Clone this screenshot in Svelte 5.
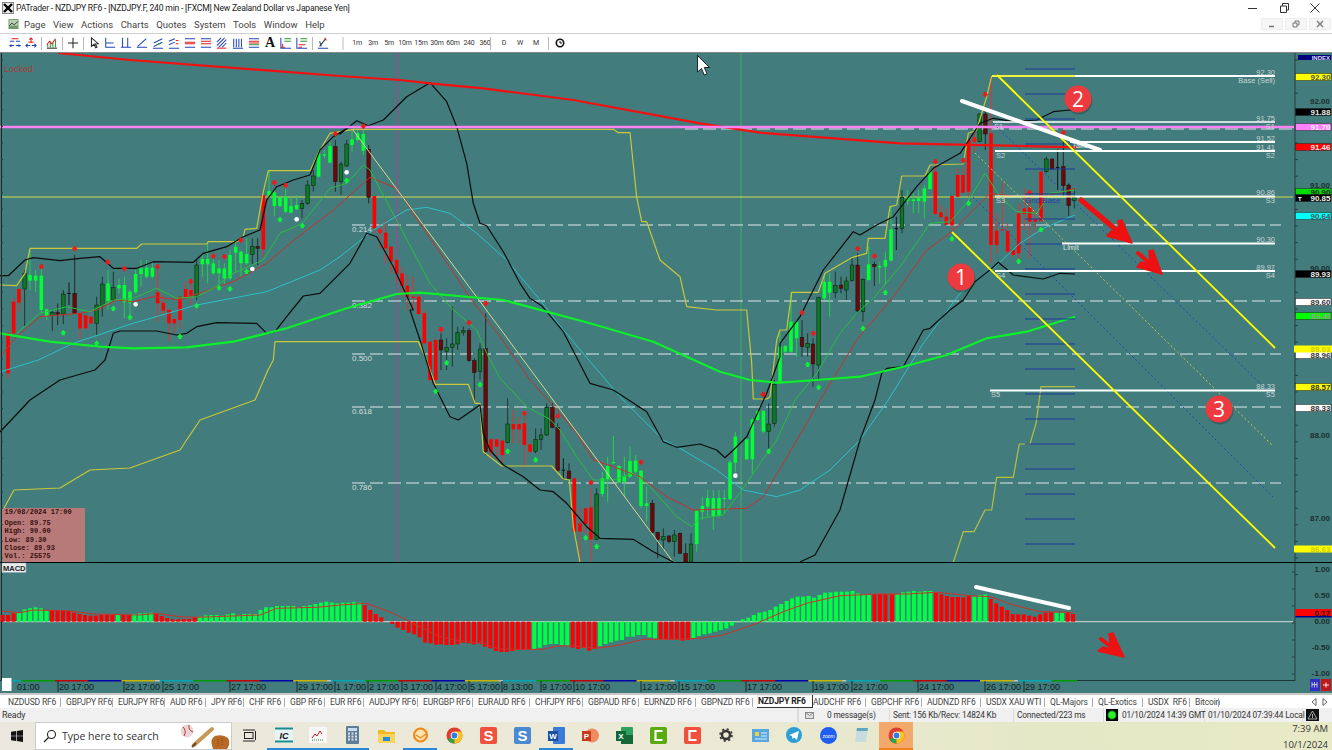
<script>
  // helpers: the coordinates below were read off 3x crops, z() maps them back to page pixels
  const z = (x0, y0, s) =>
    s.trim().split(/\s+/).map((p) => {
      const [x, y] = p.split(",").map(Number);
      return `${(x0 + x / 3).toFixed(1)},${(y0 + y / 3).toFixed(1)}`;
    }).join(" ");

  const parseCandles = (x0, y0, s) =>
    s.trim().split("\n").map((row) => {
      const [zx, k, wt, bt, bb, wb] = row.trim().split(/\s+/);
      return {
        x: x0 + zx / 3, k,
        wt: y0 + wt / 3, bt: y0 + bt / 3,
        bb: Math.min(y0 + bb / 3, 562), wb: Math.min(y0 + wb / 3, 562),
      };
    });

  const candles = [
    ...parseCandles(0, 120, `24 r 635 640 760 775
41 r 535 545 640 645
57 r 505 507 548 575
74 G 450 460 507 618
90 g 390 465 482 510
107 g 450 467 482 515
124 g 440 467 570 580
140 g 565 568 588 600
157 G 570 577 587 632
173 R 550 578 583 615
190 G 510 522 582 612
207 K 487 519 522 555
224 R 405 520 580 582
240 r 578 580 625 655
257 r 584 586 625 628
273 r 588 590 610 612
290 G 530 555 610 645
307 G 470 492 557 590
324 g 450 490 543 570
340 G 455 502 538 545
357 g 475 495 505 520
373 g 470 495 547 595
390 g 510 515 548 585
407 g 450 462 517 522
423 g 420 445 462 500
440 g 420 443 470 475
457 g 430 443 470 475
473 r 450 517 550 605
490 r 525 548 572 585
507 r 565 570 610 665
523 r 595 597 610 640
540 r 530 530 600 625
557 r 485 507 533 535
573 r 490 510 527 555
590 G 420 435 530 540
607 g 400 417 433 470
623 g 370 417 433 490
640 g 415 430 460 465
657 g 420 445 460 490
673 g 430 445 475 495
690 g 390 405 475 480
707 g 360 380 398 455
723 g 392 395 430 470
740 g 355 402 430 435
757 G 355 380 403 435
773 R 355 380 385 435
790 r 225 225 388 410
807 g 150 213 228 232
823 g 205 217 258 290
840 g 230 232 258 262
857 g 200 230 275 280
873 g 230 258 278 280
890 g 225 255 268 270
906 G 240 250 265 295
923 G 180 195 250 255
940 G 150 168 197 215
956 g 90 100 170 172
973 g 90 103 107 115
990 g 65 78 128 130
1006 R 60 80 185 215
1023 G 125 132 185 225
1040 G 60 72 138 140
1056 g 30 58 75 95
1073 g 30 40 60 65
1090 g 30 42 92 105
1106 R 75 88 232 250
1123 r 228 228 325 340
1140 r 310 333 338 385
1157 r 300 338 385 430
1173 r 378 380 425 460
1190 r 415 420 462 490
1206 r 440 460 498 530
1222 r 465 497 532 570
1240 r 470 530 534 570
1256 r 520 530 582 585`),
    ...parseCandles(400, 300, `73 r 30 40 130 135
90 r 122 125 240 245
107 r 115 120 240 250
123 R 100 120 150 210
140 G 115 142 155 210
157 G 20 132 142 200
173 G 80 97 132 150
190 G 80 92 98 107
207 R 85 92 182 185
223 R 175 182 218 310
240 G 130 147 215 240
257 R 40 145 455 465
273 r 415 418 458 475
290 r 415 418 440 480
307 r 420 422 465 490
323 G 295 372 428 430
340 r 330 372 388 430
357 r 350 372 388 430
373 r 350 370 435 500
390 r 430 433 455 460
407 G 385 418 455 460
423 G 385 405 418 450
440 G 310 322 405 408
457 R 310 322 382 385
473 R 370 382 512 515
490 K 475 509 512 540
507 R 490 513 535 538
523 r 533 535 695 700
540 r 625 670 695 786
557 r 622 625 672 700
573 r 565 622 718 786
590 G 565 582 718 720
607 g 515 535 582 590
623 g 470 498 538 605
640 g 408 486 490 490
657 g 495 498 548 550
673 g 470 527 545 590
690 g 440 483 530 535
707 g 465 482 515 520
723 g 510 512 618 625
740 g 560 610 618 665
757 R 600 610 697 700
773 R 695 697 718 775
790 G 685 710 720 750
807 R 705 708 725 730
823 G 690 705 725 770
840 R 698 700 760 762
857 R 730 760 786 786
873 G 700 732 786 786
890 g 630 632 732 755
907 g 590 618 635 660
923 g 570 594 620 650
940 g 570 594 648 690
957 g 570 594 648 652
973 g 570 594 596 640
990 g 480 487 598 600
1006 g 395 410 488 515
1040 g 415 418 478 480
1057 g 355 358 478 520
1073 g 330 333 360 362
1090 g 330 333 395 400
1106 G 310 372 395 455
1123 G 240 253 370 380`),
    ...parseCandles(760, 90, `60 g 725 770 875 878
76 g 765 768 785 790
93 g 605 695 785 788
110 g 690 695 745 800
126 R 690 742 770 800
143 G 730 760 772 800
159 R 745 762 822 890
176 G 620 622 825 870
193 g 550 575 625 630
209 g 550 575 608 680
226 G 545 587 608 625
243 R 560 585 595 610
259 G 560 573 600 630
276 G 500 525 572 575
293 R 490 525 663 670
309 G 565 568 665 695
326 g 470 523 570 572
343 R 515 523 530 588
359 g 515 528 532 580
376 g 485 510 530 585
393 g 350 418 512 515
409 K 380 414 417 480
426 G 300 322 415 430
443 g 300 322 333 345
460 g 310 328 333 370
476 g 300 322 333 370
493 g 285 295 335 385
510 g 243 245 297 300
526 r 225 245 372 375
543 r 345 367 382 390
559 r 355 380 404 406
576 r 316 318 406 420
593 r 235 255 320 322
609 r 230 255 308 310
626 r 148 150 305 320
643 r 120 150 155 185
659 G 70 72 155 157
676 R 50 72 132 180
693 r -40 130 465 520
710 r 370 422 465 490
727 r 275 418 420 420
743 r 400 423 485 490
760 r 478 480 495 500
776 r 340 370 490 510
793 r 295 355 372 420
809 r 310 352 395 505
826 r 360 388 395 430
843 r 243 245 392 395
859 G 200 207 245 248
876 R 205 207 237 240
893 K 178 231 234 300
910 R 125 230 287 320
926 R 280 285 347 378
943 G 295 322 332 355`),
  ];

  const bodyColor = { r: "#ff0000", g: "#00ff33", G: "#0b7a22", R: "#6e0808", K: "#101010" };
  const wickColor = { r: "#e23232", g: "#22d24c", G: "#1c3a2a", R: "#2a2a2a", K: "#151515" };

  // small arrow and dot markers
  const marks = (x0, y0, s) =>
    s.trim().split(/\s+/).map((p) => {
      const [x, y] = p.split(",").map(Number);
      return [x0 + x / 3, y0 + y / 3];
    });
  const redMarks = [
    ...marks(0, 120, "224,388 124,442 323,428 373,448 473,442 573,486 640,410 673,412 723,362 823,190 857,198 1006,43 1090,20 1140,335 1323,630"),
    ...marks(400, 300, "123,90 207,70 257,12 373,342 473,350 573,550 723,488 1090,285"),
    ...marks(760, 90, "10,915 126,670 160,732 293,478 343,500 526,217 610,213 643,150 676,15 809,310 910,130"),
  ];
  const greenMarks = [
    ...marks(0, 120, "190,637 290,668 340,564 390,590 540,648 590,556 657,502 690,505 740,453 840,297 907,316 1040,180"),
    ...marks(400, 300, "107,272 140,187 240,252 323,452 407,478 557,712 590,738 1106,452"),
    ...marks(760, 90, "143,822 176,890 309,714 376,606 576,445 626,338 776,512 843,417"),
  ];
  const whiteDots = [
    ...marks(0, 120, "407,553 757,447 890,298 1040,157"),
    ...marks(400, 300, "1006,527"),
  ];

  // indicator lines
  const upperBand = [
    z(0, 120, "0,467 25,467 75,420 100,413 180,422 240,415 300,410 340,445 410,445 460,425 580,427 610,400 680,380 730,350 780,330 800,240 830,200 880,180 930,165 960,90 1000,50 1040,25"),
    z(340, 60, "0,222 50,182 85,197 130,180 200,110 270,68 320,125 350,200 380,310 400,430 420,490 440,497 490,575 540,670 570,715 605,737"),
    z(400, 300, "490,95 570,250 640,270 740,335 790,425 830,442 900,432 950,450 975,473 1000,450 1040,410 1100,280 1140,170"),
    z(760, 90, "60,760 120,680 190,540 280,425 300,435 350,405 400,380 470,290 520,235 600,190 660,100 700,85 760,95 830,90 880,65 930,60 950,62"),
  ].join(" ");
  const lowerBand = [
    "0,432 30,400 60,380 95,370",
    z(0, 120, "315,720 340,640 360,633 470,633 530,645 560,640 590,620 650,608 770,610 800,640 825,635 860,590 910,528 960,520 990,490 1050,430 1100,340 1130,350 1180,440 1240,570"),
    z(400, 300, "30,30 60,120 100,250 150,350 175,360 240,315 250,400 270,450 310,495 370,530 420,570 460,575 500,610 560,680 600,715 700,718 760,755 820,786"),
  ].join(" ");
  const lowerBand2 = [
    "800,562 815,555 840,510 860,440",
    z(760, 90, "345,930 365,850 380,835 430,830 490,720 510,715 570,660 610,630 645,575 690,540 715,517 760,555 850,567 900,550 945,552"),
  ].join(" ");
  const cyanLine = [
    "0,372",
    z(0, 120, "115,720 220,670 400,610 590,555 800,515 960,450"),
    z(340, 60, "0,590 100,510 200,450 260,442 330,460 410,520 500,600 600,720"),
    z(400, 300, "490,90 660,290 790,420 840,445 950,510 1030,570 1130,590 1200,570"),
    "830,470 860,440",
    z(760, 90, "385,930 490,760 600,610 700,535 780,460 850,415 945,375"),
  ].join(" ");
  const thickGreen = [
    z(0, 120, "0,640 150,665 300,680 400,685 560,682 700,665 860,625 1040,565 1190,522 1260,518"),
    z(400, 300, "310,0 570,70 760,125 960,215 1050,240 1120,247"),
    z(760, 90, "60,878 170,870 300,860 430,830 560,795 680,745 800,725 945,680"),
  ].join(" ");
  const thinGreen = [
    z(0, 120, "50,640 120,580 200,560 270,575 340,540 400,535 470,505 530,535 590,530 640,505 700,460 790,420 840,340 907,310 990,205 1040,190 1090,135 1110,150 1200,320 1290,490"),
    z(400, 300, "155,25 230,90 265,170 300,235 380,320 450,358 480,390 530,470 580,540 640,540 700,520 750,560 830,650 875,680 900,655 970,645 1040,550 1080,490 1130,420"),
    z(760, 90, "105,930 170,850 240,730 290,670 340,625 420,530 490,430 510,400 570,395 620,340 675,250 720,320 770,365 830,370 870,310 945,300"),
  ].join(" ");
  const thinRed = [
    z(0, 120, "0,710 50,650 120,590 240,580 290,570 350,540 400,545 460,530 540,540 640,505 700,485 800,430 870,370 1000,270 1110,172 1190,205"),
    z(400, 300, "215,0 300,110 390,240 470,330 530,400 580,480 640,500 720,530 800,590 880,630 1040,625 1090,590 1150,490"),
    z(760, 90, "180,930 290,750 400,620 500,480 575,425 620,380 690,310 770,320 850,320 945,295"),
  ].join(" ");
  const thickRed = "58,53 130,60 " + z(340, 60, "0,48 180,60 270,70 430,85 700,120 1080,190") + " " + z(760, 90, "0,128 420,160 950,172");
  const stepUpper = [
    z(0, 120, "0,495 50,497 75,460 90,385 410,385 425,372 620,372 625,365 710,365 730,350 735,328 770,325 790,215 805,152 930,152 960,90 990,40 1060,28"),
    z(340, 60, "820,208 835,218 870,218 890,412 905,485 920,485 960,600 1020,650 1040,740"),
    z(400, 300, "950,30 1040,30 1055,190 1060,297 1100,297"),
    z(760, 90, "30,920 50,750 60,720 80,720 95,607 175,607 195,550 275,503 320,490 325,445 375,445 390,350 410,345 425,258 495,258 510,225 610,222 625,130 650,120 680,20 695,-42"),
  ].join(" ");
  const stepLower = [
    "3,510 14,490 60,488 90,470 130,468 180,450 200,420 255,400 268,370",
    z(0, 120, "820,720 825,665 1255,665 1280,720"),
    z(400, 300, "60,125 105,253 205,253 225,310 240,310 250,455 305,498 455,498 490,537 508,540 520,680 540,786"),
  ].join(" ");
  const stepRight = z(900, 220, "160,1027 190,935 222,935 255,870 275,870 290,772 340,772 358,672 390,672 408,610 423,500 525,500");

  const dashed = [[225, "0.214"], [301, "0.382"], [354, "0.500"], [407, "0.618"], [483, "0.786"]];
  const blueTicks = Array.from({ length: 20 }, (_, i) => 69 + i * 25);

  const levels = [
    { y: 76, x1: 992, v: "92.30", note: "Base (Sell)", w: 2 },
    { y: 122, x1: 993, v: "91.75", s: "S1", w: 1.5 },
    { y: 142, x1: 1070, v: "91.52", w: 2 },
    { y: 151, x1: 995, v: "91.41", s: "S2", w: 2 },
    { y: 196.5, x1: 995, v: "90.86", s: "S3", w: 2 },
    { y: 243.5, x1: 1062, v: "90.30", w: 2 },
    { y: 271, x1: 995, v: "89.97", s: "S4", w: 2 },
    { y: 390.5, x1: 990, v: "88.33", s: "S5", w: 2 },
  ];

  const priceBoxes = [
    { y: 77, t: "92.30", bg: "#ffff00", c: "#555" },
    { y: 112, t: "91.88", bg: "#000", c: "#eee" },
    { y: 127, t: "91.70", bg: "#ff80ff", c: "#eee" },
    { y: 147, t: "91.46", bg: "#ff0000", c: "#eee" },
    { y: 192, t: "90.90", bg: "#00dd00", c: "#222" },
    { y: 198, t: "90.85", bg: "#000", c: "#eee" },
    { y: 216, t: "90.64", bg: "#00ffff", c: "#555" },
    { y: 274, t: "89.93", bg: "#000", c: "#eee" },
    { y: 302, t: "89.60", bg: "#fff", c: "#333" },
    { y: 316, t: "89.43", bg: "#00ff00", c: "#999" },
    { y: 355, t: "88.96", bg: "#fff", c: "#333" },
    { y: 349, t: "89.03", bg: "#ffff00", c: "#cc0", wide: true },
    { y: 387, t: "88.57", bg: "#ffff00", c: "#333" },
    { y: 408, t: "88.33", bg: "#fff", c: "#333" },
    { y: 549, t: "86.63", bg: "#ffff00", c: "#cc0", wide: true },
  ];
  const axisText = [[92.0, 104], [91.0, 188], [90.0, 271], [88.0, 438], [87.0, 521]];
  const macdAxis = [["1.00", 572], ["0.50", 598], ["0.00", 624], ["-0.50", 650], ["-1.00", 676]];
  const axisTicks = Array.from({ length: 32 }, (_, i) => 60 + i * 16.6);
  const macdTicks = Array.from({ length: 7 }, (_, i) => 572 + i * 17);

  // MACD histogram
  const ZERO = 621.7;
  const bars = (x0, y0, start, s) =>
    s.trim().split(/\s+/).map((p, i) => {
      const y = y0 + Number(p.slice(1)) / 3;
      return { x: x0 + (start + i * 16.46) / 3, y: Math.min(y, ZERO), h: Math.abs(y - ZERO), c: p[0] === "g" ? "#00ff44" : "#ff0000" };
    });
  const macd = [
    ...bars(0, 500, 8, "r345 r345 r340 g337 g328 g325 g322 g325 g332 r330 r333 r333 r333 r338 r342 r345 r347 r347 r345 r345 r345 g345 r345 r345 g342 g340 g340 g338 r342 r348 r354 r358 r358 r357 r357 r352 g350 g346 g345 g345 g347 g343 g340 g345 g342 g342 g342 g330 g322 g322 g318 g318 g318 g318 g322 g318 g316 g312 g308 g305 g308 g310 g308 g308 g306 g308 r316 r330 r342 r352 r365 r372 r383 r390 r398 r403 r412 r428 r430 r434"),
    ...bars(440, 575, 3, "r208 r210 r210 r208 r203 r205 r208 r203 r215 r220 r228 r231 r231 r228 r224 r223 r223 g222 g218 g210 g207 g207 g210 g211 r218 r222 r218 r227 r221 g213 g207 g202 g197 g195 g185 g185 g180 g180 g187 g190 r192 r192 r193 r193 r197 r195 g190 g183 g178 g175 g170 g165 g160 g152 g142 g133 g128 g120 g113 g110 g105 g95 g87 g78 g70 g65 g65 g63 g68 g60 g53 g52 g50 g50 g50 g48 g55 g58 g58 r57 r57 r58"),
    ...bars(880, 565, 36, "r87 g88 g82 g80 g78 g80 g78 g78 r83 r88 r93 r96 r96 r97 r93 g95 g90 g88 r102 r115 r125 r135 r147 r148 r148 r152 r155 r148 r143 r142 g143 g143 r143 r147"),
  ];
  const signal = [
    z(0, 500, "5,333 60,338 100,330 200,332 280,342 420,345 470,340 540,350 590,352 640,350 780,345 830,325 950,322 1020,315 1100,310 1180,340 1230,365 1300,400"),
    z(440, 575, "0,185 60,197 120,205 180,222 230,223 310,223 350,213 400,213 470,220 540,210 610,193 700,193 780,190 850,180 950,145 1030,110 1100,85 1200,62"),
    z(880, 565, "0,87 80,87 170,82 270,92 330,95 400,120 480,140 580,142"),
  ].join(" ");

  // time axis
  const stripColors = [["#00a5b5", 33.3], ["#009a00", 33.3], ["#c00000", 33.3], ["#0000a8", 33.3], ["#c8b400", 33.3], ["#c0c0c0", 5]];
  const strip = [];
  for (let base = -11.7; base < 1077; base += 171.7) {
    let x = base;
    for (const [c, w] of stripColors) {
      const a = Math.max(x, 12), b = Math.min(x + w, 1077);
      if (b > a) strip.push({ x: a, w: b - a, c });
      x += w;
    }
  }
  const timeLabels = [[16, "01:00", false], [58, "20 17:00"], [124, "22 17:00"], [163, "25 17:00"], [230, "27 17:00"], [297, "29 17:00"], [335, "1 17:00"], [368, "2 17:00"], [402, "3 17:00"], [436, "4 17:00"], [469, "5 17:00"], [502, "8 13:00"], [541, "9 17:00"], [574, "10 17:00"], [641, "12 17:00"], [679, "15 17:00"], [746, "17 17:00"], [813, "19 17:00"], [852, "22 17:00"], [918, "24 17:00"], [985, "26 17:00"], [1024, "29 17:00"]];

  const infoLines = ["Open: 89.75", "High: 90.00", "Low: 89.30", "Close: 89.93", "Vol.: 25575"];

  // chrome
  const menus = ["Page", "View", "Actions", "Charts", "Quotes", "System", "Tools", "Window", "Help"];
  const timeframes = ["1m", "3m", "5m", "10m", "15m", "30m", "60m", "240", "360"];

  const B = "#2446b8", Rd = "#e02020", Gn = "#2a9a3a", K = "#222";
  const tools = [
    [[B, "M1 5h5M8 5h5"], [Rd, "M3 2h8"], [B, "M3 9l-2 1 2 1M11 9l2 1-2 1"], [B, "M1 10h5M8 10h5"]],
    [[Rd, "M7 1v6M5 3l2-2 2 2"], [Rd, "M4 6h6"], [B, "M1 10h5M8 10h5M3 8l-2 2 2 2M11 8l2 2-2 2"]],
    "sep",
    [[Gn, "M2 12V8M5 12V5M8 12V7M11 12V3"], [Rd, "M1 9l3-4 3 3 4-6"], [K, "M1 13h12"]],
    "sep",
    [[K, "M7 1v12M1 7h12"]],
    "sep",
    [[K, "M4 1v10l3-2.5 2 4 1.5-.8-2-3.7 3.5-.2z"]],
    [[B, "M2 1v11h11M2 7h9"]],
    [[B, "M3 1v11M9 1v11M1 12h12"]],
    [[B, "M1 12h12M2 11L12 2"]],
    [[B, "M1 13h12M2 11l10-5M2 7l10-5"], [Gn, "M6 9l5-2"]],
    [[B, "M1 13h12M1 9l7-3M1 5l7-3"], [Rd, "M9 8h3M9 4h3"]],
    [[B, "M1 2h12M1 12h12"], [Rd, "M1 6h12M1 8h12"]],
    [[B, "M1 2h12M1 12h12"], [Rd, "M1 5h12M1 8h12"]],
    [[B, "M1 6l5-5M1 10l9-9M3 12l9-9M7 12l5-5"], [Rd, "M1 13h11"]],
    [[B, "M2 2v10M5 2v10M8 2v10M11 2v10M1 13h12"]],
    [[B, "M1 2h12M1 12h12"], [Rd, "M1 5h12M1 7h12"], [Gn, "M1 9h12"]],
    "A",
    [[Gn, "M5 2h8M5 5h8"], [Rd, "M1 12h5M3 8v4"], [B, "M1 1v12h12"]],
    [[Gn, "M5 2h8M5 5h8"], [Rd, "M3 9h8M3 12h4"], [B, "M1 1v12h12"]],
    "sep",
    [[K, "M3 11l7-9"], [Rd, "M9 1l2 3"], [B, "M1 13h12M3 5l2 6"]],
    "sep2",
  ];

  const tabs = [["NZDUSD RF6", 8], ["GBPJPY RF6", 66], ["EURJPY RF6", 118], ["AUD RF6", 170], ["JPY RF6", 211], ["CHF RF6", 249], ["GBP RF6", 290], ["EUR RF6", 330], ["AUDJPY RF6", 369], ["EURGBP RF6", 423], ["EURAUD RF6", 478], ["CHFJPY RF6", 535], ["GBPAUD RF6", 588], ["EURNZD RF6", 644], ["GBPNZD RF6", 701], ["NZDJPY RF6", 758], ["AUDCHF RF6", 814], ["GBPCHF RF6", 872], ["AUDNZD RF6", 928], ["USDX XAU WTI", 987], ["QL-Majors", 1051], ["QL-Exotics", 1099], ["USDX  RF6", 1149], ["Bitcoin", 1196], ["", 1225]];
</script>

<div class="screen">
  <header class="titlebar">
    <svg class="logo" viewBox="0 0 12 12"><rect width="12" height="12" fill="#888" /><rect x="1" y="1" width="10" height="10" fill="#eee" /><path d="M2 2l8 8M10 2l-8 8" stroke="#000" stroke-width="2.4" /></svg>
    <span class="title">PATrader - NZDJPY RF6 - [NZDJPY.F, 240 min - [FXCM] New Zealand Dollar vs Japanese Yen]</span>
    <div class="winbtns">
      <svg width="12" height="12" viewBox="0 0 12 12"><path d="M1 6.5h9" stroke="#333" /></svg>
      <svg width="12" height="12" viewBox="0 0 12 12"><path d="M2.5 4h6v6.5h-6zM4.5 4V1.5h6V8H8.500" stroke="#333" fill="none" /></svg>
      <svg width="12" height="12" viewBox="0 0 12 12"><path d="M1.500 1.500l9 9M10.500 1.500l-9 9" stroke="#333" /></svg>
    </div>
  </header>

  <nav class="menubar">
    <svg class="menuicon" viewBox="0 0 12 12"><rect width="12" height="12" fill="#6f9b6a" /><rect x="1" y="1" width="10" height="7" fill="#b8d0b0" /><path d="M1 8l3-3 3 2 4-4" stroke="#222" fill="none" /></svg>
    {#each menus as m}
      <span class="menu">{m}</span>
    {/each}
    <div class="mdibtns">
      <span class="mdi"><svg width="8" height="8"><path d="M1 6.500h5" stroke="#777" stroke-width="1.500" /></svg></span>
      <span class="mdi"><svg width="8" height="8"><path d="M1 3h4v4H1zM3 3V1h4v4H5" stroke="#777" fill="none" /></svg></span>
      <span class="mdi"><svg width="8" height="8"><path d="M1 1l6 6M7 1L1 7" stroke="#777" stroke-width="1.300" /></svg></span>
    </div>
  </nav>

  <div class="toolbar">
    <div class="tools">
      {#each tools as t}
        {#if t === "sep"}
          <i class="sep"></i>
        {:else if t === "sep2"}
          <i class="sep wide"></i>
        {:else if t === "A"}
          <span class="tool fontA">A</span>
        {:else}
          <svg class="tool" viewBox="0 0 14 14" fill="none" stroke-width="1.200">
            {#each t as [c, d]}<path stroke={c} {d} />{/each}
          </svg>
        {/if}
      {/each}
    </div>
    <div class="frames">
      {#each timeframes as f}<span class="tf">{f}</span>{/each}
      <i class="sep first"></i>
      <span class="tf dwm">D</span><span class="tf dwm">W</span><span class="tf dwm">M</span>
      <i class="sep last"></i>
      <svg class="clock" viewBox="0 0 10 10"><circle cx="5" cy="5" r="3.700" fill="none" stroke="#111" stroke-width="1.600" /><path d="M5 3v2h2" stroke="#111" fill="none" /></svg>
    </div>
  </div>

  <svg class="chart" viewBox="0 53 1332 640" width="1332" height="640">
    <rect x="0" y="53" width="1332" height="640" fill="#427c7c" />

    <!-- verticals and horizontals -->
    <line x1="397" y1="53" x2="397" y2="562" stroke="#b03c96" stroke-width="1" />
    <line x1="741" y1="53" x2="741" y2="562" stroke="#3fae62" stroke-width="1" />
    <line x1="2" y1="197" x2="1293" y2="197" stroke="#d4dc50" stroke-width="1" />

    {#each dashed as [y, label]}
      <line x1="352" y1={y} x2="1281" y2={y} stroke="#e2eaea" stroke-width="1" stroke-dasharray="13 5" />
      <text x="352" y={y + 7} class="fib">{label}</text>
    {/each}
    <line x1="685" y1="129" x2="1293" y2="129" stroke="#e2eaea" stroke-width="1" stroke-dasharray="13 5" />

    <!-- candles -->
    {#each candles as c}
      <line x1={c.x} x2={c.x} y1={c.wt} y2={c.wb} stroke={wickColor[c.k]} stroke-width="1" />
      <rect x={c.x - 1.8} y={c.bt} width="3.600" height={Math.max(c.bb - c.bt, 1)} fill={bodyColor[c.k]} stroke={c.k === "G" || c.k === "R" ? "#111" : "none"} stroke-width=".5" />
    {/each}

    <!-- indicators -->
    <polyline points={stepLower} class="ln" stroke="#c8c83a" stroke-width="1.200" />
    <polyline points={stepUpper} class="ln" stroke="#c8c83a" stroke-width="1.200" />
    <polyline points={stepRight} class="ln" stroke="#b8c040" stroke-width="1.200" />
    <polyline points={cyanLine} class="ln" stroke="#2cc0c8" stroke-width="1" />
    <polyline points={thinRed} class="ln" stroke="#c8302c" stroke-width="1" />
    <polyline points={thinGreen} class="ln" stroke="#28c040" stroke-width="1" />
    <line x1="353" y1="130" x2="673" y2="562" stroke="#d8d88a" stroke-width="1" />
    <polyline points={upperBand} class="ln" stroke="#0c0c0c" stroke-width="1.200" />
    <polyline points={lowerBand} class="ln" stroke="#0c0c0c" stroke-width="1.200" />
    <polyline points={lowerBand2} class="ln" stroke="#0c0c0c" stroke-width="1.200" />
    <polyline points={thickGreen} class="ln" stroke="#0cf02c" stroke-width="2.200" />
    <polyline points={thickRed} class="ln" stroke="#f41010" stroke-width="2.200" />
    <line x1="0" y1="127" x2="1294" y2="127" stroke="#ff82f4" stroke-width="2.500" />

    <!-- markers -->
    {#each redMarks as [x, y]}
      <polygon points="{x - 1.5},{y - 3} {x + 1.5},{y - 3} {x + 1.5},{y - 1} {x + 3},{y - 1} {x},{y + 2.500} {x - 3},{y - 1} {x - 1.5},{y - 1}" fill="#f01818" />
    {/each}
    {#each greenMarks as [x, y]}
      <polygon points="{x - 1.5},{y + 3} {x + 1.5},{y + 3} {x + 1.5},{y + 1} {x + 3},{y + 1} {x},{y - 2.500} {x - 3},{y + 1} {x - 1.5},{y + 1}" fill="#0cf23c" />
    {/each}
    {#each whiteDots as [x, y]}
      <circle cx={x} cy={y} r="2.300" fill="#fff" />
    {/each}

    <!-- fork / grid -->
    {#each blueTicks as y}
      <line x1="1025" x2="1075" y1={y} y2={y} stroke="#1c389c" stroke-width="1" />
    {/each}
    <line x1="993" y1="123" x2="1272" y2="395" class="dot" stroke="#2446c0" />
    <line x1="973" y1="197" x2="1273" y2="497" class="dot" stroke="#2446c0" />
    <line x1="975" y1="153" x2="1272" y2="445" class="dot" stroke="#c8cc40" />

    {#each levels as l}
      <line x1={l.x1} x2="1275" y1={l.y} y2={l.y} stroke="#fff" stroke-width={l.w} />
      <text x="1275" y={l.y - 1.500} class="lvl">{l.v}</text>
      {#if l.s}
        <text x="1275" y={l.y + 6.500} class="lvl">{l.s}</text>
        <text x={l.x1 + 1} y={l.y + 6.500} class="lvl start">{l.s}</text>
      {/if}
      {#if l.note}
        <text x="1275" y={l.y + 7} class="lvl">{l.note}</text>
      {/if}
    {/each}
    <line x1="992" y1="76" x2="1075" y2="76" stroke="#f2f040" stroke-width="2" />
    <line x1="995" y1="196.500" x2="1075" y2="196.500" stroke="#e8e87a" stroke-width="1" />
    <text x="1025" y="203" class="grid">Grid Base</text>
    <text x="1063" y="250" class="limit">Limit</text>
    <text x="1072" y="148" class="limit">Take</text>

    <line x1="997" y1="75" x2="1275" y2="348" stroke="#ffff00" stroke-width="1.800" />
    <line x1="952" y1="232" x2="1275" y2="548" stroke="#ffff00" stroke-width="1.800" />

    <!-- hand-drawn annotations -->
    <line x1="962" y1="101" x2="1100" y2="150" class="marker" />
    <g fill="#ee1111" stroke="#ee1111" stroke-linecap="round" stroke-linejoin="round">
      <line x1="1081" y1="200" x2="1121" y2="234" stroke-width="5" />
      <polygon points="1132,243 1107,236 1111,231 1119,233 1118,221 1122,220" stroke-width="1.500" />
      <line x1="1138" y1="253" x2="1155" y2="268" stroke-width="4" />
      <polygon points="1162,274 1137,267 1141,262 1150,264 1149,251 1153,250" stroke-width="1.500" />
    </g>
    {#each [[961, 277, "1"], [1078, 99, "2"], [1219, 409, "3"]] as [cx, cy, n]}
      <circle cx={cx + 1} cy={cy + 2} r="13.500" fill="#1c3a3a" opacity=".35" />
      <circle {cx} {cy} r="13.500" fill="#ec3a3e" />
      <text x={cx} y={cy + 7.500} class="num">{n}</text>
    {/each}

    <text x="4" y="72" class="locked">Locked</text>

    <!-- info box -->
    <rect x="2" y="508" width="83" height="54" fill="#b87a78" />
    <text x="4.500" y="514" class="info">19/08/2024 17:00</text>
    {#each infoLines as t, i}
      <text x="4.500" y={525 + i * 8.300} class="info">{t}</text>
    {/each}

    <!-- left and price axis -->
    <line x1="1.500" y1="53" x2="1.500" y2="680" stroke="#222" stroke-width="1" />
    <line x1="1295" y1="53" x2="1295" y2="681" stroke="#263f3f" stroke-width="1" />
    {#each axisTicks as y}
      <line x1="1295" x2="1298" y1={y} y2={y} stroke="#263f3f" stroke-width="1" />
      <line x1="1" x2="3" y1={y} y2={y} stroke="#263f3f" stroke-width="1" />
    {/each}
    <rect x="1298" y="55" width="33" height="5" fill="#00007a" />
    <text x="1330" y="60" class="idx">INDEX</text>
    {#each axisText as [v, y]}
      <text x="1330" {y} class="ax">{v.toFixed(2)}</text>
    {/each}
    {#each priceBoxes as b}
      <rect x={b.wide ? 1294 : 1295.500} y={b.y - 3.500} width={b.wide ? 38 : 35.500} height="7" fill={b.bg} stroke={b.wide ? "none" : "#222"} stroke-width=".5" />
      <text x="1330.500" y={b.y + 3} class="axb" fill={b.c}>{b.t}</text>
    {/each}
    <text x="1298" y="201" class="tmark">T</text>

    <!-- macd -->
    <line x1="0" y1="562.500" x2="1332" y2="562.500" stroke="#000" stroke-width="1.200" />
    <rect x="2" y="563" width="24" height="9.500" fill="#eaeaea" stroke="#9ab" stroke-width=".5" />
    <text x="3" y="570.500" class="macdlabel">MACD</text>
    <line x1="3" y1={ZERO} x2="1293" y2={ZERO} stroke="#bcc8c8" stroke-width="1.200" />
    {#each macd as b}
      <rect x={b.x - 2} y={b.y} width="4" height={b.h} fill={b.c} />
    {/each}
    <polyline points={signal} class="ln" stroke="#d03028" stroke-width="1" />
    <line x1="976" y1="587" x2="1069" y2="608" class="marker" />
    <g fill="#ee1111" stroke="#ee1111" stroke-linecap="round" stroke-linejoin="round">
      <line x1="1101" y1="639" x2="1118" y2="652" stroke-width="4" />
      <polygon points="1124,657 1098,651 1103,647 1111,649 1109,634 1113,633" stroke-width="1.500" />
    </g>
    {#each macdTicks as y}
      <line x1="1292" x2="1295" y1={y} y2={y} stroke="#263f3f" stroke-width="1" />
    {/each}
    <rect x="1295.500" y="609" width="36" height="7" fill="#ff0000" />
    <rect x="1295.500" y="616" width="36" height="1.500" fill="#000090" />
    <text x="1330" y="615.500" class="axb" fill="#222">0.17</text>
    {#each macdAxis as [t, y]}
      <text x="1330" {y} class="ax">{t}</text>
    {/each}

    <!-- time axis -->
    <line x1="0" y1="680.500" x2="1295" y2="680.500" stroke="#20383a" stroke-width="1" />
    {#each strip as s}
      <rect x={s.x} y="680" width={s.w} height="1.500" fill={s.c} />
    {/each}
    {#each timeLabels as [x, t, tick]}
      {#if tick !== false}<line x1={x} x2={x} y1="681" y2="692" stroke="#1a2a2a" stroke-width="1" />{/if}
      <text x={x + 1} y="690" class="time">{t}</text>
    {/each}
    <rect x="2" y="678" width="9.500" height="13" fill="#fff" />
    <rect x="1310" y="679" width="10" height="12" fill="#3030c0" />
    <path d="M1312 682v5.500M1314.500 682v5.500M1312 684.500h5M1317 682v5.500" stroke="#ddd" fill="none" stroke-width=".8" />
    <rect x="1321" y="679" width="10" height="12" fill="#c01818" />
    <path d="M1323 685h6M1326 682.500v5" stroke="#eee" fill="none" />

    <!-- mouse pointer -->
    <polygon points="697.500,55.500 697.500,72 701.500,68.500 704.300,75 707,73.800 704.300,67.500 709.500,67.500" fill="#fff" stroke="#000" stroke-width=".8" />
  </svg>

  <div class="tabs">
    {#each tabs.slice(0, -1) as [name, x], i}
      <span class="tab" class:active={name === "NZDJPY RF6"} style="width: {tabs[i + 1][1] - x}px">{name}</span>
    {/each}
    <span class="pager">
      <svg width="6" height="8"><path d="M5 .5v7L1 4z" fill="none" stroke="#666" /></svg>
      <svg width="6" height="8"><path d="M1 .5v7L5 4z" fill="none" stroke="#666" /></svg>
    </span>
  </div>

  <footer class="status">
    <span class="cell ready">Ready</span>
    <span class="cell msg">
      <svg width="9" height="7"><rect x=".5" y=".5" width="8" height="6" fill="#e0e0e0" stroke="#888" /><path d="M.5 .5l4 3 4-3" stroke="#888" fill="none" /></svg>
      <span>0 message(s)</span>
    </span>
    <span class="cell sent">Sent: 156 Kb/Recv: 14824 Kb</span>
    <span class="cell conn">Connected/223 ms</span>
    <span class="cell led"><i></i></span>
    <span class="cell gmt">01/10/2024 14:39 GMT</span>
    <span class="cell local">01/10/2024 07:39:44 Local</span>
    <span class="cell warn"><svg width="13" height="12"><rect width="13" height="12" fill="#111" /><path d="M6.500 2L2 10h9z" fill="none" stroke="#aaa" /><path d="M6.500 5v4" stroke="#aaa" /></svg></span>
  </footer>

  <div class="taskbar">
    <svg class="winlogo" viewBox="0 0 12 12"><path d="M0 1.700l5-.7v4.700H0zM5.700.9L12 0v5.700H5.700zM0 6.300h5V11l-5-.7zM5.700 6.300H12V12l-6.300-.9z" fill="#111" /></svg>
    <div class="search">
      <svg width="14" height="14" viewBox="0 0 14 14"><circle cx="8.500" cy="5.500" r="4" fill="none" stroke="#222" stroke-width="1.100" /><path d="M5.500 8.500L1 13" stroke="#222" stroke-width="1.200" /></svg>
      <span class="placeholder">Type here to search</span>
      <svg class="art" viewBox="0 0 52 26" width="52" height="26">
        <circle cx="8" cy="8" r="6.500" fill="#ead6d6" />
        <path d="M4 4q4 4 1 9M10 2q-1 5 4 7" stroke="#c03030" fill="none" />
        <path d="M15 22L33 6" stroke="#c89858" stroke-width="4" stroke-linecap="round" />
        <path d="M13 24l4-4" stroke="#704a28" stroke-width="2" />
        <path d="M34 26q-4-10 2-13 8-2 13 2 3 6-1 11z" fill="#b86a24" />
        <path d="M39 16v7M43 15v8" stroke="#7a4012" stroke-dasharray="1 1" />
      </svg>
    </div>
    <div class="apps">
      <span class="app"><svg width="14" height="13" viewBox="0 0 14 13" fill="none" stroke="#222"><rect x="1.500" y="3.500" width="8.500" height="6" /><path d="M0 1h12M0 12h12M12.500 2v9" /></svg></span>
      <span class="app run"><svg width="18" height="16"><rect width="18" height="16" fill="#e8f4f4" /><path d="M0 1.500h18M0 14.500h18" stroke="#1a8a90" stroke-width="2" /><text x="9" y="12" class="ic">IC</text></svg></span>
      <span class="app run"><svg width="18" height="16"><rect width="18" height="16" fill="#f8f8f8" /><path d="M3 11l3-4 2 2 3-5 2 3" stroke="#c02020" fill="none" /><path d="M3 13h12" stroke="#208a40" stroke-dasharray="1 1" /></svg></span>
      <span class="app run"><svg width="13" height="18"><rect width="13" height="18" rx="1" fill="#5f7f98" /><rect x="2" y="2" width="9" height="3" fill="#cde" /><path d="M2 7.500h2M5.500 7.500h2M9 7.500h2M2 10.500h2M5.500 10.500h2M9 10.500h2M2 13.500h2M5.500 13.500h2M9 13.500h2" stroke="#dde" stroke-width="2" /></svg></span>
      <span class="app"><svg width="17" height="15"><path d="M0 2h6l2 2h9v11H0z" fill="#f2b820" /><rect y="6" width="17" height="9" fill="#fad35a" /><rect x="5" y="9" width="7" height="4" fill="#2a8ad8" /></svg></span>
      <span class="app run"><svg width="17" height="17"><circle cx="8.500" cy="8" r="6.500" fill="#fbe4b8" stroke="#f08a18" stroke-width="2.200" /><path d="M4 8l4.500 3L14 7" stroke="#f08a18" fill="none" stroke-width="1.400" /></svg></span>
      <span class="app"><svg class="chrome" width="17" height="17" viewBox="0 0 17 17"><circle cx="8.500" cy="8.500" r="8" fill="#e13c30" /><path d="M8.500 8.500L1.600 12.500A8 8 0 0 0 8.500 16.500z" fill="#2fa24a" /><path d="M8.500 8.500V16.500A8 8 0 0 0 15.400 4.500H8.500z" fill="#f7c21a" /><circle cx="8.500" cy="8.500" r="3.800" fill="#fff" /><circle cx="8.500" cy="8.500" r="2.900" fill="#2f7de0" /></svg></span>
      <span class="app"><svg width="17" height="17"><rect width="17" height="17" rx="2" fill="#f0503e" /><text x="8.500" y="14" class="lt">S</text></svg></span>
      <span class="app"><svg width="17" height="17"><rect width="17" height="17" rx="2" fill="#4a8ad0" /><text x="8.500" y="14" class="lt">S</text></svg></span>
      <span class="app run"><svg width="17" height="17"><rect x="5" width="12" height="17" rx="1" fill="#3a7ad8" /><rect y="4" width="10" height="10" fill="#1a4ea0" /><text x="5" y="12" class="lts">W</text></svg></span>
      <span class="app"><svg width="17" height="17"><circle cx="10" cy="8.500" r="7" fill="#f08a60" /><rect y="4" width="9" height="10" fill="#c43a1a" /><text x="4.500" y="12" class="lts">P</text></svg></span>
      <span class="app"><svg width="17" height="17"><rect x="5" width="12" height="17" rx="1" fill="#2fa060" /><rect x="5" y="8" width="12" height="9" fill="#14683a" /><rect y="4" width="10" height="10" fill="#106a38" /><text x="5" y="12" class="lts">X</text></svg></span>
      <span class="app"><svg width="17" height="17"><rect width="17" height="17" rx="2" fill="#5aaa12" /><path d="M12.500 4H5.500v9h7" fill="none" stroke="#fff" stroke-width="2.200" /></svg></span>
      <span class="app"><svg width="17" height="17"><rect width="17" height="17" rx="2" fill="#f0503e" /><path d="M12.500 4H5.500v9h7" fill="none" stroke="#fff" stroke-width="2.200" /></svg></span>
      <span class="app"><svg width="14" height="14"><circle cx="7" cy="7" r="4" fill="none" stroke="#333" stroke-width="2.400" /><circle cx="7" cy="7" r="6" fill="none" stroke="#333" stroke-width="1.600" stroke-dasharray="2.200 2.500" /></svg></span>
      <span class="app"><svg width="17" height="13"><rect width="17" height="13" fill="#58a8e0" /><rect x="3" y="3" width="4" height="4" fill="#f0d040" /><path d="M9 4h6M9 7h6M3 10h12" stroke="#d8ecf8" /></svg></span>
      <span class="app"><svg width="16" height="16"><circle cx="8" cy="8" r="8" fill="#2d9ed8" /><path d="M3 8l10-4-2 9-3-2.500-1.500 1.500-.5-3z" fill="#fff" /></svg></span>
      <span class="app"><svg width="17" height="17"><circle cx="8.500" cy="8.500" r="8.500" fill="#1f5ef0" /><text x="8.500" y="10.500" class="zm">zoom</text></svg></span>
      <span class="app"><svg width="16" height="16"><path d="M3 1h11l-2 14H1z" fill="#c8dce0" /><path d="M3 1h11l-.5 3H2.500z" fill="#60a8c0" /></svg></span>
      <span class="app chromeactive"><svg width="17" height="17" viewBox="0 0 17 17"><circle cx="8.500" cy="8.500" r="8" fill="#e13c30" /><path d="M8.500 8.500L1.600 12.500A8 8 0 0 0 8.500 16.500z" fill="#2fa24a" /><path d="M8.500 8.500V16.500A8 8 0 0 0 15.400 4.500H8.500z" fill="#f7c21a" /><circle cx="8.500" cy="8.500" r="3.800" fill="#fff" /><circle cx="8.500" cy="8.500" r="2.900" fill="#2f7de0" /></svg></span>
    </div>
    <div class="clockbox">
      <span>7:39 AM</span>
      <span>10/1/2024</span>
    </div>
  </div>
</div>

<style>
  :global(body) {
    margin: 0;
    overflow: hidden;
  }

  .screen {
    width: 1332px;
    height: 750px;
    display: flex;
    flex-direction: column;
    background: #fff;
    overflow: hidden;
    font-family: "Roboto", "Liberation Sans", sans-serif;
    color: #333;
  }

  .titlebar {
    height: 15px;
    display: flex;
    align-items: center;
    padding-left: 2px;
    font-size: 8.6px;
    letter-spacing: -0.2px;
  }

  .logo {
    width: 12px;
    height: 12px;
    margin-right: 2px;
  }

  .title {
    flex: 1;
    color: #222;
    margin-top: 1px;
  }

  .winbtns {
    display: flex;
    gap: 19px;
    padding-right: 11px;
    padding-top: 1px;
  }

  .menubar {
    height: 18px;
    display: flex;
    align-items: center;
    padding-left: 8px;
    font-size: 9.5px;
    color: #444;
    border-bottom: 1px solid #cfcfcf;
    box-sizing: content-box;
  }

  .menuicon {
    width: 11px;
    height: 10px;
    margin-right: 5px;
  }

  .menu {
    margin-right: 7.5px;
  }

  .mdibtns {
    display: flex;
    gap: 2px;
    margin-left: auto;
    padding-right: 1px;
  }

  .mdi {
    width: 22px;
    height: 12px;
    display: flex;
    align-items: center;
    justify-content: center;
    background: #f6f6f6;
    border: 1px solid #eee;
    box-sizing: border-box;
  }

  .toolbar {
    height: 19px;
    display: flex;
    align-items: center;
    border-bottom: 1px solid #888;
    box-sizing: border-box;
  }

  .tools {
    display: flex;
    align-items: center;
    padding-left: 7px;
    width: 350px;
    box-sizing: border-box;
    flex: none;
  }

  .tool {
    width: 12px;
    height: 12px;
    margin: 0 2px;
    flex: none;
  }

  .fontA {
    font-family: "Liberation Serif", serif;
    font-weight: bold;
    font-size: 14px;
    line-height: 12px;
    text-align: center;
    color: #111;
  }

  .sep {
    width: 1px;
    height: 13px;
    background: #b8b8b8;
    margin: 0 2px;
    flex: none;
  }

  .sep.wide {
    margin-left: 11px;
    width: 2px;
    background: #ddd;
  }

  .frames {
    display: flex;
    align-items: center;
    font-size: 7px;
    letter-spacing: -0.2px;
    color: #333;
    margin-left: -1px;
  }

  .tf {
    width: 16px;
    text-align: center;
    flex: none;
  }

  .frames .sep.first {
    margin: 0 5px 0 -3px;
  }

  .frames .sep.last {
    margin: 0 6px 0 4px;
  }

  .clock {
    width: 10px;
    height: 10px;
  }

  .chart {
    display: block;
    flex: none;
    font-family: "Liberation Sans", sans-serif;
  }

  .ln {
    fill: none;
    stroke-linejoin: round;
  }

  .dot {
    stroke-width: 1;
    stroke-dasharray: 2 2.500;
  }

  .marker {
    stroke: #fff;
    stroke-width: 4;
    stroke-linecap: round;
  }

  .fib {
    font-size: 8px;
    fill: #d4dcdc;
  }

  .lvl {
    font-size: 7.5px;
    fill: #c8d4d4;
    text-anchor: end;
  }

  .lvl.start {
    text-anchor: start;
  }

  .grid {
    font-size: 8px;
    fill: #2a3ea8;
  }

  .limit {
    font-size: 7.5px;
    fill: #dbe4e4;
  }

  .num {
    font-family: "Open Sans", sans-serif;
    font-size: 21px;
    fill: #fff;
    text-anchor: middle;
  }

  .locked {
    font-size: 9px;
    fill: #a83c3c;
  }

  .info {
    font-family: "Liberation Mono", monospace;
    font-size: 7px;
    font-weight: bold;
    fill: #3a1010;
  }

  .idx {
    font-size: 6px;
    font-weight: bold;
    fill: #dde;
    text-anchor: end;
  }

  .ax {
    font-size: 8px;
    font-weight: bold;
    fill: #1c2e2e;
    text-anchor: end;
  }

  .axb {
    font-size: 8px;
    font-weight: bold;
    text-anchor: end;
  }

  .tmark {
    font-size: 6px;
    font-weight: bold;
    fill: #fff;
  }

  .macdlabel {
    font-size: 7.500px;
    font-weight: bold;
    fill: #222;
  }

  .time {
    font-size: 9px;
    fill: #141e1e;
  }

  .tabs {
    height: 15px;
    display: flex;
    align-items: center;
    padding-left: 8px;
    font-size: 8.5px;
    letter-spacing: -0.15px;
    color: #444;
    border-top: 2px solid #c8c8c8;
    box-sizing: border-box;
    white-space: pre;
  }

  .tab {
    flex: none;
    box-sizing: border-box;
    position: relative;
    line-height: 12px;
  }

  .tab::after {
    content: "";
    position: absolute;
    right: 5px;
    top: 2px;
    height: 9px;
    width: 1px;
    background: #aaa;
  }

  .tab.active {
    font-weight: bold;
    color: #222;
    margin-left: -1px;
    padding-left: 1px;
    box-shadow: inset 1px 1px 0 #eee;
    border-right: 1px solid #333;
    border-bottom: 1px solid #333;
  }

  .tab.active::after {
    display: none;
  }

  .pager {
    margin-left: auto;
    display: flex;
    gap: 5px;
    padding-right: 4px;
  }

  .status {
    height: 14px;
    display: flex;
    background: #f0f0f0;
    font-size: 8.3px;
    letter-spacing: -0.15px;
    color: #333;
  }

  .cell {
    display: flex;
    align-items: center;
    box-sizing: border-box;
    border-right: 1px solid #dcdcdc;
    padding-left: 3px;
    white-space: nowrap;
  }

  .ready {
    width: 798px;
    padding-left: 2px;
    font-size: 8.8px;
  }

  .msg {
    width: 92px;
    padding-left: 6px;
    gap: 13px;
    border-left: 1px solid #dcdcdc;
  }

  .sent {
    width: 124px;
  }

  .conn {
    width: 90px;
  }

  .led {
    width: 15px;
    padding-left: 2px;
  }

  .led i {
    width: 12px;
    height: 12px;
    background: #000 radial-gradient(circle, #2cf02c 0 3px, #0c8a0c 4px, #000 5px);
    display: block;
  }

  .gmt {
    width: 86px;
  }

  .local {
    width: 98px;
  }

  .warn {
    border: none;
  }

  .taskbar {
    height: 28px;
    display: flex;
    align-items: stretch;
    background: linear-gradient(90deg, #eae8de 0%, #ece9d6 50%, #e4e8c6 80%, #e8eac6 100%);
  }

  .winlogo {
    width: 12px;
    height: 12px;
    margin: 8px 12px 0 11px;
  }

  .search {
    width: 197px;
    display: flex;
    align-items: center;
    gap: 0;
    background: #fff;
    box-sizing: border-box;
    border: 1px solid #ccc;
    padding-left: 7px;
    position: relative;
  }

  .placeholder {
    font-family: "Open Sans", sans-serif;
    font-size: 10.5px;
    color: #333;
    margin-left: 5px;
  }

  .art {
    position: absolute;
    right: 0;
    bottom: 0;
  }

  .apps {
    display: flex;
    margin-left: 1px;
  }

  .app {
    width: 34px;
    flex: none;
    display: flex;
    align-items: center;
    justify-content: center;
    box-sizing: border-box;
    border-bottom: 2px solid transparent;
  }

  .app.run {
    border-bottom-color: #2a86d8;
    background-clip: padding-box;
  }

  .chromeactive {
    background: #f3a86c;
    border-bottom-color: #f08020;
  }

  .ic {
    font-family: "Liberation Sans", sans-serif;
    font-size: 9px;
    font-weight: bold;
    font-style: italic;
    fill: #111;
    text-anchor: middle;
  }

  .lt {
    font-family: "Liberation Sans", sans-serif;
    font-size: 15px;
    font-weight: bold;
    fill: #fff;
    text-anchor: middle;
  }

  .lts {
    font-family: "Liberation Sans", sans-serif;
    font-size: 8px;
    font-weight: bold;
    fill: #fff;
    text-anchor: middle;
  }

  .zm {
    font-family: "Liberation Sans", sans-serif;
    font-size: 5px;
    fill: #fff;
    text-anchor: middle;
  }

  .clockbox {
    margin-left: auto;
    display: flex;
    flex-direction: column;
    align-items: flex-end;
    justify-content: center;
    gap: 3px;
    font-family: "Open Sans", sans-serif;
    font-size: 9.5px;
    color: #333;
    padding-right: 4px;
  }
</style>
